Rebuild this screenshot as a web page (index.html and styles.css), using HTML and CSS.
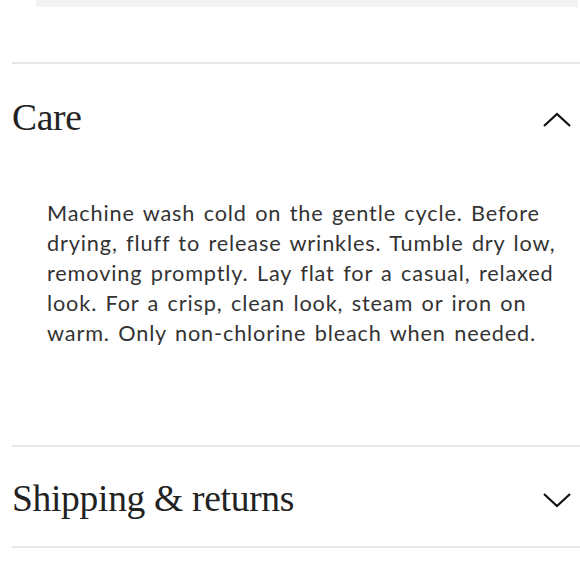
FILE: index.html
```html
<!DOCTYPE html>
<html>
<head>
<meta charset="utf-8">
<link rel="stylesheet" href="styles.css">
</head>
<body>
<div class="page">
  <div class="top-box"></div>
  <div class="accordion">
    <section class="item">
      <div class="item-head">
        <h2 class="item-title">Care</h2>
        <svg class="chev chev-up" width="30" height="16" viewBox="0 0 30 16"><polyline points="2,14 15,2 28,14" fill="none" stroke="#111" stroke-width="2.2"/></svg>
      </div>
      <div class="item-body">
        <p>Machine wash cold on the gentle cycle. Before drying, fluff to release wrinkles. Tumble dry low, removing promptly. Lay flat for a casual, relaxed look. For a crisp, clean look, steam or iron on warm. Only non-chlorine bleach when needed.</p>
      </div>
    </section>
    <section class="item">
      <div class="item-head item-head-closed">
        <h2 class="item-title">Shipping &amp; returns</h2>
        <svg class="chev chev-down" width="30" height="16" viewBox="0 0 30 16"><polyline points="2,2 15,14 28,2" fill="none" stroke="#111" stroke-width="2.2"/></svg>
      </div>
    </section>
    <div class="end-line"></div>
  </div>
</div>
</body>
</html>
```
FILE: styles.css
```css
html, body {
  margin: 0;
  padding: 0;
  background: #fff;
}
.page {
  width: 580px;
  height: 580px;
  overflow: hidden;
}
.top-box {
  margin-left: 36px;
  margin-right: 2px;
  height: 7px;
  background: #f3f3f3;
}
.accordion {
  margin-top: 55px;
  margin-left: 12px;
}
.item {
  border-top: 2px solid #e7e7e7;
}
.item-head {
  height: 104px;
  display: flex;
  align-items: center;
  justify-content: space-between;
  padding-right: 8px;
}
.item-head-closed {
  height: 99px;
}
.item-head-closed .item-title {
  margin-top: 4px;
}
.item-title {
  margin: 0;
  margin-top: 3px;
  font-family: "Liberation Serif", serif;
  font-weight: normal;
  font-size: 37.5px;
  letter-spacing: -0.3px;
  color: #222;
  line-height: 1.1;
}
.chev {
  display: block;
  margin-top: 7px;
}
.item-body {
  padding: 30px 20px 97px 35px;
}
.item-body p {
  margin: 0;
  font-family: "Lato", sans-serif;
  font-size: 21.7px;
  letter-spacing: 0.85px;
  word-spacing: 2px;
  line-height: 30px;
  color: #333;
}
.end-line {
  border-top: 2px solid #e7e7e7;
}
```
